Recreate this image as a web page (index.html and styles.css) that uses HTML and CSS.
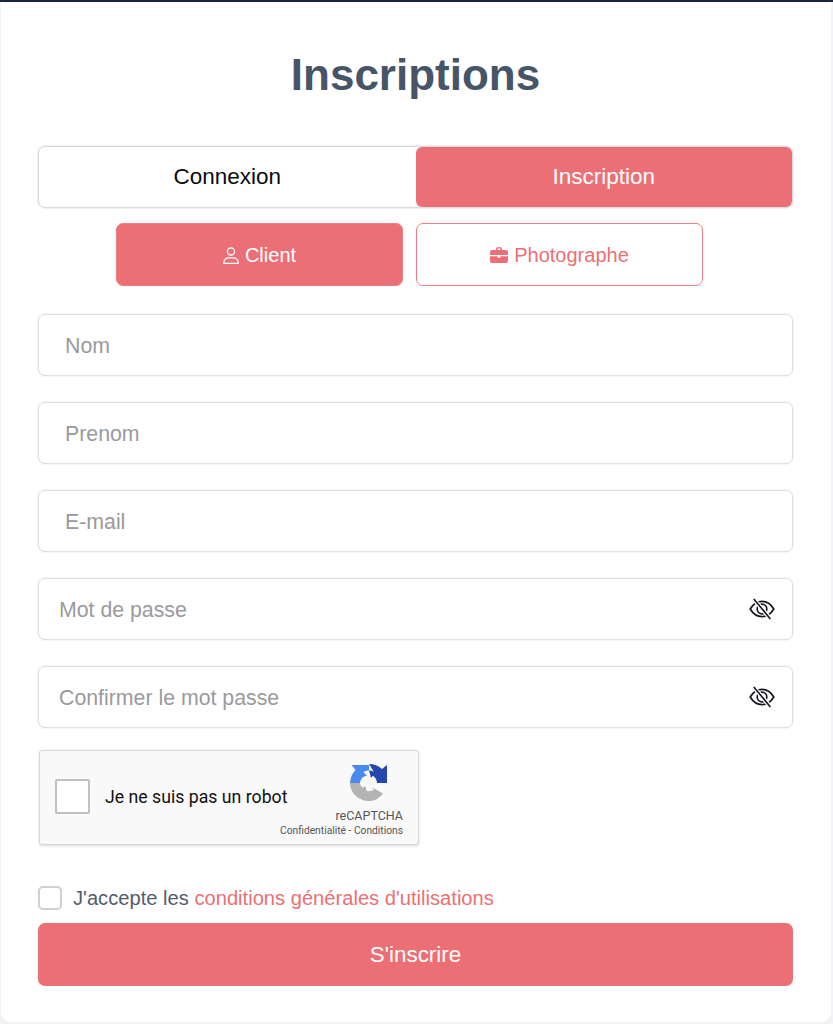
FILE: index.html
```html
<!DOCTYPE html>
<html lang="fr">
<head>
<meta charset="utf-8">
<title>Inscriptions</title>
<link rel="stylesheet" href="styles.css">
</head>
<body>
<main class="card">
  <h1 class="title">Inscriptions</h1>
  <div class="tabs">
    <button class="tab">Connexion</button>
    <button class="tab tab-active">Inscription</button>
  </div>
  <div class="roles">
    <button class="role role-active">
      <svg class="role-icon icon-user" viewBox="0 0 16 17" fill="none" stroke="currentColor" stroke-width="1.300"><circle cx="8" cy="4.400" r="3.600"/><path d="M.8 16.300v-.5c0-3.200 2.400-5 4.700-5h5c2.300 0 4.700 1.800 4.700 5v.5z"/></svg>
      Client
    </button>
    <button class="role">
      <svg class="role-icon icon-case" viewBox="0 0 18 16" fill="currentColor"><path d="M6 3V1.800C6 .9 6.700.2 7.600.2h2.800c.9 0 1.600.7 1.600 1.600V3h-1.500V1.800c0-.1 0-.2-.1-.2H7.600c-.1 0-.1.1-.1.2V3z"/><path d="M2 3h14c1.100 0 2 .9 2 2v3H0V5c0-1.100.9-2 2-2z"/><path d="M0 9.200h7.500V10c0 .4.3.7.7.7h1.600c.4 0 .7-.3.7-.7v-.8H18V14c0 1.100-.9 2-2 2H2c-1.100 0-2-.9-2-2z"/></svg>
      Photographe
    </button>
  </div>
  <form class="fields">
    <div class="field"><input class="input" type="text" placeholder="Nom"></div>
    <div class="field"><input class="input" type="text" placeholder="Prenom"></div>
    <div class="field"><input class="input" type="text" placeholder="E-mail"></div>
    <div class="field">
      <input class="input input-pass" type="password" placeholder="Mot de passe">
      <svg class="eye" viewBox="0 0 26 22" fill="none" stroke="#16181d" stroke-width="1.700"><path d="M1.200 11C4 6.300 8.200 3.400 13 3.400S22 6.300 24.800 11C22 15.700 17.800 18.600 13 18.600S4 15.700 1.200 11z"/><circle cx="13" cy="11" r="4.800"/><path stroke="#fff" stroke-width="4.200" d="M5.500 2l15.200 18"/><path d="M4.800 1l16.600 20"/></svg>
    </div>
    <div class="field">
      <input class="input input-pass" type="password" placeholder="Confirmer le mot passe">
      <svg class="eye" viewBox="0 0 26 22" fill="none" stroke="#16181d" stroke-width="1.700"><path d="M1.200 11C4 6.300 8.200 3.400 13 3.400S22 6.300 24.800 11C22 15.700 17.800 18.600 13 18.600S4 15.700 1.200 11z"/><circle cx="13" cy="11" r="4.800"/><path stroke="#fff" stroke-width="4.200" d="M5.500 2l15.200 18"/><path d="M4.800 1l16.600 20"/></svg>
    </div>
  </form>
  <div class="captcha">
    <span class="captcha-box"></span>
    <span class="captcha-label">Je ne suis pas un robot</span>
    <div class="captcha-brand">
      <svg class="captcha-logo" viewBox="0 0 38 39"><path fill="#b3b3b3" d="M0 20H10c.4 2 1.200 3.500 2.500 4.800l2.500-2 1.500 5c2.800.8 5.500.2 7.500-1.300L21.500 24 33 30.500C29 35.500 24.500 38 19 38 8.500 38 0 30 0 20z"/><path fill="#4a8af0" d="M0 20C.3 14.500 2.500 10 5.500 7L1.500 2H19V7.500c-2 0-4 .5-5.500 1.500L17 13c-3-.3-6 1.500-7 7z"/><path fill="#2546ab" d="M19 1c5 0 9.500 1.800 13 5L37 2V20H27c-.2-3-1.500-5.500-4-7.200L21 15l-2-7.500c2 0 3.700.5 5 1.500z"/></svg>
      <span class="captcha-name">reCAPTCHA</span>
      <span class="captcha-links">Confidentialité - Conditions</span>
    </div>
  </div>
  <label class="terms">
    <span class="terms-box"></span>
    <span>J'accepte les <a class="terms-link">conditions générales d'utilisations</a></span>
  </label>
  <button class="submit">S'inscrire</button>
</main>
</body>
</html>
```
FILE: styles.css
```css
* { box-sizing: border-box; }
html, body { height: 100%; }
body {
  margin: 0;
  background: #f3f3f5;
  border-top: 2px solid #1a2440;
  font-family: "Liberation Sans", Arial, sans-serif;
  overflow: hidden;
}
.card {
  width: 830px;
  height: 1020px;
  margin-left: 1px;
  background: #fff;
  border-radius: 0 0 10px 10px;
  padding: 0 38px 0 37px;
  display: flex;
  flex-direction: column;
}
.title {
  margin: 44px 0 0;
  height: 100px;
  font-size: 44px;
  line-height: 58px;
  font-weight: 700;
  color: #475569;
  text-align: center;
}
.tabs {
  display: flex;
  height: 62px;
  border: 1px solid #d9dadd;
  border-radius: 7px;
  background: #fff;
  box-shadow: 0 0 0 1px rgba(220,221,225,.4);
}
.tab {
  flex: 1;
  border: 0;
  background: none;
  font: 22.500px "Liberation Sans", Arial, sans-serif;
  color: #0b0b10;
  border-radius: 6px;
  padding: 0;
}
.tab-active { background: #ec6f75; color: #fff; }
.roles {
  display: flex;
  gap: 13px;
  margin-top: 15px;
  margin-left: 78px;
}
.role {
  width: 287px;
  height: 63px;
  border: 1px solid #ee7c82;
  border-radius: 7px;
  background: #fff;
  color: #ec6f75;
  font: 20px "Liberation Sans", Arial, sans-serif;
  display: flex;
  align-items: center;
  justify-content: center;
  gap: 6px;
  padding: 1px 0 0;
}
.role-active { background: #ec6f75; color: #fff; }
.role-icon { flex: none; }
.icon-user { width: 16px; height: 17px; }
.icon-case { width: 18px; height: 16px; }
.fields {
  display: flex;
  flex-direction: column;
  gap: 26px;
  margin-top: 28px;
}
.field { position: relative; }
.input {
  display: block;
  width: 100%;
  height: 62px;
  border: 1px solid #dedfe2;
  border-radius: 7px;
  background: #fff;
  padding: 2px 26px 0;
  font: 21.300px "Liberation Sans", Arial, sans-serif;
  outline: none;
  box-shadow: 0 0 0 1px rgba(225,226,230,.35);
}
.input::placeholder { color: #9a9a9e; opacity: 1; }
.input-pass { padding: 2px 60px 0 20px; }
.eye {
  position: absolute;
  right: 18px;
  top: 20px;
  width: 26px;
  height: 22px;
}
.captcha {
  position: relative;
  width: 380px;
  height: 95px;
  margin-top: 22px;
  margin-left: 1px;
  background: #f9f9f9;
  border: 1px solid #d6d6d6;
  border-radius: 3px;
  box-shadow: 0 1px 3px rgba(0,0,0,.15);
  display: flex;
  align-items: center;
  padding: 0 0 2px 15px;
}
.captcha-box {
  width: 35px;
  height: 35px;
  background: #fff;
  border: 2px solid #c1c1c1;
  border-radius: 2px;
  flex: none;
}
.captcha-label {
  margin-left: 15px;
  font: 17.700px Roboto, "Liberation Sans", sans-serif;
  color: #111;
}
.captcha-brand {
  position: absolute;
  right: 15px;
  top: 12px;
  display: flex;
  flex-direction: column;
  align-items: flex-end;
}
.captcha-logo { width: 38px; height: 39px; margin-right: 15px; }
.captcha-name {
  margin-top: 6px;
  font: 12.500px/15px Roboto, "Liberation Sans", sans-serif;
  color: #555;
}
.captcha-links {
  margin-top: 1px;
  font: 10.250px/14px Roboto, "Liberation Sans", sans-serif;
  color: #555;
  white-space: nowrap;
}
.terms {
  display: flex;
  align-items: center;
  gap: 11px;
  margin-top: 41px;
  height: 24px;
  font-size: 20.150px;
  color: #525c6c;
}
.terms-box {
  width: 24px;
  height: 24px;
  border: 2px solid #cfd0d3;
  border-radius: 5px;
  background: #fff;
  flex: none;
}
.terms-link { color: #ec6f75; }
.submit {
  margin-top: 13px;
  height: 63px;
  border: 0;
  border-radius: 7px;
  background: #ec6f75;
  color: #fff;
  font: 22.400px "Liberation Sans", Arial, sans-serif;
}
```
